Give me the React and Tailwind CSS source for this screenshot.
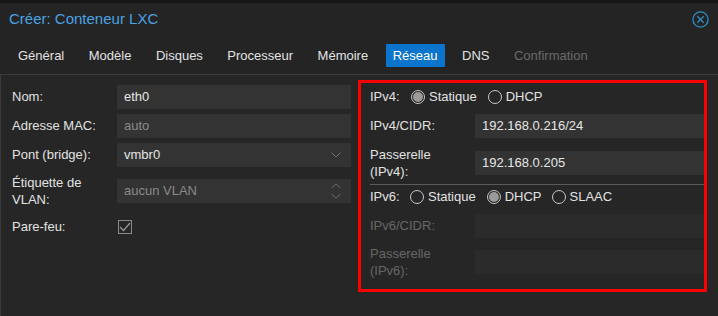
import React from 'react';

const tabs = [
  { label: 'Général' },
  { label: 'Modèle' },
  { label: 'Disques' },
  { label: 'Processeur' },
  { label: 'Mémoire' },
  { label: 'Réseau', active: true },
  { label: 'DNS' },
  { label: 'Confirmation', disabled: true },
];

function Radio({ checked }) {
  return (
    <span className="w-[14px] h-[14px] rounded-full border border-[#c8c8c8] flex items-center justify-center shrink-0">
      {checked && <span className="w-[10px] h-[10px] rounded-full bg-[#9a9a9a]" />}
    </span>
  );
}

function RadioOpt({ checked, label, className = '' }) {
  return (
    <span className={`flex items-center gap-[4px] ${className}`}>
      <Radio checked={checked} />
      <span>{label}</span>
    </span>
  );
}

function Field({ value, muted, disabled, children }) {
  return (
    <div className={`flex-1 h-[24px] flex items-center pl-[7px] pr-[10px] ${disabled ? 'bg-[#2b2b2b]' : 'bg-[#333333]'}`}>
      <span className={`flex-1 ${muted ? 'text-[#8a8a8a]' : 'text-[#e6e6e6]'}`}>{value}</span>
      {children}
    </div>
  );
}

export default function App() {
  return (
    <div className="w-[718px] h-[316px] bg-[#242424] overflow-hidden flex flex-col text-[13px] text-[#e2e2e2]" style={{ fontFamily: '"Liberation Sans", Arial, sans-serif' }}>
      <div className="h-[3px] bg-[#161616] shrink-0" />

      {/* header */}
      <div className="h-[32px] flex items-center justify-between pl-[9px] pr-[9px] shrink-0">
        <span className="text-[15px] text-[#4aa2e2]">Créer: Conteneur LXC</span>
        <svg width="17" height="17" viewBox="0 0 17 17" fill="none" stroke="#2e8fc6" strokeWidth="1.3">
          <circle cx="8.5" cy="8.5" r="7.6" />
          <path d="M5.3 5.3 L11.7 11.7 M11.7 5.3 L5.3 11.7" />
        </svg>
      </div>

      {/* tabs */}
      <div className="mt-[9px] h-[23px] flex pl-[11px] gap-[10.5px] shrink-0">
        {tabs.map((t) => (
          <div
            key={t.label}
            className={`px-[7px] flex items-center rounded-[1px] ${t.active ? 'bg-[#0b74cc] text-white' : t.disabled ? 'text-[#6a6a6a]' : 'text-[#e2e2e2]'}`}
          >
            {t.label}
          </div>
        ))}
      </div>

      {/* body */}
      <div className="mt-[7px] flex-1 bg-[#262626] border-t border-l border-[#3a3a3a] flex pl-[11px]">
        {/* left column */}
        <div className="w-[339px] pt-[10px] flex flex-col">
          <div className="h-[24px] flex items-center">
            <span className="w-[105px]">Nom:</span>
            <Field value="eth0" />
          </div>
          <div className="mt-[5px] h-[24px] flex items-center">
            <span className="w-[105px]">Adresse MAC:</span>
            <Field value="auto" muted />
          </div>
          <div className="mt-[5px] h-[24px] flex items-center">
            <span className="w-[105px]">Pont (bridge):</span>
            <Field value="vmbr0">
              <svg width="10" height="6" viewBox="0 0 10 6" fill="none" stroke="#6e6e6e" strokeWidth="1">
                <path d="M0.5 0.5 L5 5 L9.5 0.5" />
              </svg>
            </Field>
          </div>
          <div className="mt-[7px] h-[34px] flex items-center">
            <span className="w-[105px] leading-[17px]">Étiquette de<br />VLAN:</span>
            <Field value="aucun VLAN" muted>
              <svg width="10" height="16" viewBox="0 0 10 16" fill="none" stroke="#6e6e6e" strokeWidth="1">
                <path d="M0.5 5 L5 0.8 L9.5 5" />
                <path d="M0.5 11 L5 15.2 L9.5 11" />
              </svg>
            </Field>
          </div>
          <div className="mt-[7px] h-[24px] flex items-center">
            <span className="w-[105px]">Pare-feu:</span>
            <span className="w-[14px] h-[14px] border border-[#8a8a8a] flex items-center justify-center ml-[1px]">
              <svg width="12" height="10" viewBox="0 0 12 10" fill="none" stroke="#9a9a9a" strokeWidth="1.2">
                <path d="M1 5 L4.5 8.5 L11 1" />
              </svg>
            </span>
          </div>
        </div>

        {/* right column (highlighted) */}
        <div className="ml-[7px] mt-[5px] w-[349px] h-[212px] border-[3px] border-[#ff0000] pl-[9px] pt-[2px] flex flex-col">
          <div className="h-[24px] flex items-center">
            <span className="w-[41px]">IPv4:</span>
            <RadioOpt checked label="Statique" />
            <RadioOpt label="DHCP" className="ml-[11px]" />
          </div>
          <div className="mt-[5px] h-[24px] flex items-center">
            <span className="w-[105px]">IPv4/CIDR:</span>
            <Field value="192.168.0.216/24" />
          </div>
          <div className="mt-[8px] h-[34px] flex items-center">
            <span className="w-[105px] leading-[17px]">Passerelle<br />(IPv4):</span>
            <Field value="192.168.0.205" />
          </div>
          <div className="mt-[4px] h-px bg-[#5a5a5a]" />
          <div className="h-[24px] flex items-center">
            <span className="w-[40px]">IPv6:</span>
            <RadioOpt label="Statique" />
            <RadioOpt checked label="DHCP" className="ml-[11px]" />
            <RadioOpt label="SLAAC" className="ml-[10px]" />
          </div>
          <div className="mt-[5px] h-[24px] flex items-center text-[#666666]">
            <span className="w-[105px]">IPv6/CIDR:</span>
            <Field value="" disabled />
          </div>
          <div className="mt-[7px] h-[34px] flex items-center text-[#666666]">
            <span className="w-[105px] leading-[17px]">Passerelle<br />(IPv6):</span>
            <Field value="" disabled />
          </div>
        </div>
      </div>
    </div>
  );
}
